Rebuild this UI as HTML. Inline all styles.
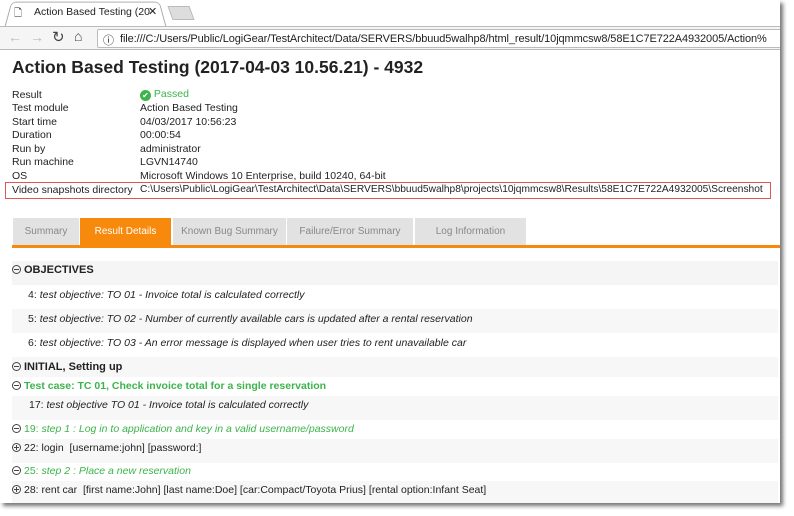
<!DOCTYPE html>
<html><head><style>
*{margin:0;padding:0;box-sizing:border-box}
body{width:794px;height:516px;background:#fff;font-family:"Liberation Sans",sans-serif;position:relative;overflow:hidden;font-size:10.5px;color:#222}
.a{position:absolute;white-space:nowrap}
.win{position:absolute;left:0;top:0;width:780px;height:503px;background:#fff;box-shadow:3px 3px 4px rgba(0,0,0,.55);overflow:hidden}
.tabbar{position:absolute;left:0;top:0;width:780px;height:26px;background:#fff}
.chtab{position:absolute;left:8px;top:1px;width:155px;height:26px;background:#fff;border:1px solid #aaa;border-bottom:none;border-radius:5px 5px 0 0;transform:perspective(40px) rotateX(8deg)}
.nav{position:absolute;left:0;top:26px;width:780px;height:24px;background:#f5f5f5;border-top:1px solid #bbb;border-bottom:1px solid #bbb}
.url{position:absolute;left:97px;top:2px;width:700px;height:19px;background:#fff;border:1px solid #bbb;border-radius:2px;font-size:11px;padding:3px 0 0 22px;color:#222;letter-spacing:-0.1px}
.lbl{left:12px}.val{left:140px}
.tab{position:absolute;top:218px;height:27px;background:#e2e2e2;color:#888;font-size:10px;text-align:center;line-height:27px}
.row{position:absolute;left:12px;width:766px;height:24px}
.g{color:#3cb44b}
.ci{display:inline-block;width:9px;height:9px;border:1px solid #444;border-radius:50%;position:relative;vertical-align:-1px;margin-right:3px}
.ci:before{content:"";position:absolute;left:1px;right:1px;top:3px;height:1px;background:#444}
.ci.p:after{content:"";position:absolute;top:1px;bottom:1px;left:3px;width:1px;background:#444}
i{font-style:italic}
</style></head><body>
<div class="win">
<div class="tabbar"></div>
<div class="chtab"></div>
<div class="a" style="left:14px;top:6px;font-size:10px">&#128459;</div>
<div class="a" style="left:34px;top:6px;font-size:10.5px">Action Based Testing (20</div>
<div class="a" style="left:148px;top:5px;font-size:11px">✕</div>
<div class="a" style="left:170px;top:6px;width:22px;height:14px;background:#ddd;border:1px solid #bbb;transform:skewX(20deg)"></div>
<div class="nav">
<div class="a" style="left:8px;top:2px;font-size:14px;color:#bbb">←</div>
<div class="a" style="left:30px;top:2px;font-size:14px;color:#bbb">→</div>
<div class="a" style="left:52px;top:1px;font-size:15px;color:#444">↻</div>
<div class="a" style="left:74px;top:1px;font-size:14px;color:#444">⌂</div>
<div class="url"><span class="a" style="left:5px;top:2px;font-size:11px">ⓘ</span>file:///C:/Users/Public/LogiGear/TestArchitect/Data/SERVERS/bbuud5walhp8/html_result/10jqmmcsw8/58E1C7E722A4932005/Action%</div>
</div>
<div class="a" style="left:12px;top:57px;font-size:17.5px;font-weight:bold;color:#222">Action Based Testing (2017-04-03 10.56.21) - 4932</div>
<div class="a lbl" style="top:89px">Result</div><div class="a val g" style="top:88px"><span style="display:inline-block;width:11px;height:11px;border-radius:50%;background:#3cb44b;color:#fff;font-size:8px;text-align:center;line-height:11px;vertical-align:-1px">✔</span> Passed</div>
<div class="a lbl" style="top:102px">Test module</div><div class="a val" style="top:102px">Action Based Testing</div>
<div class="a lbl" style="top:116px">Start time</div><div class="a val" style="top:116px">04/03/2017 10:56:23</div>
<div class="a lbl" style="top:129px">Duration</div><div class="a val" style="top:129px">00:00:54</div>
<div class="a lbl" style="top:143px">Run by</div><div class="a val" style="top:143px">administrator</div>
<div class="a lbl" style="top:156px">Run machine</div><div class="a val" style="top:156px">LGVN14740</div>
<div class="a lbl" style="top:170px">OS</div><div class="a val" style="top:170px">Microsoft Windows 10 Enterprise, build 10240, 64-bit</div>
<div class="a" style="left:5px;top:182px;width:766px;height:17px;border:1px solid #e05555"></div>
<div class="a lbl" style="top:184px">Video snapshots directory</div><div class="a val" style="top:184px;font-size:10.2px">C:\Users\Public\LogiGear\TestArchitect\Data\SERVERS\bbuud5walhp8\projects\10jqmmcsw8\Results\58E1C7E722A4932005\Screenshot</div>
<div class="tab" style="left:13px;width:66px">Summary</div>
<div class="tab" style="left:80px;width:91px;background:#f7890c;color:#fff">Result Details</div>
<div class="tab" style="left:173px;width:113px">Known Bug Summary</div>
<div class="tab" style="left:287px;width:126px">Failure/Error Summary</div>
<div class="tab" style="left:415px;width:111px">Log Information</div>
<div class="a" style="left:12px;top:245px;width:768px;height:3px;background:#f7890c"></div>
<div class="row" style="top:261px;background:#f5f5f5"></div>
<div class="a" style="left:12px;top:264px;font-weight:bold;font-size:11px"><span class="ci"></span>OBJECTIVES</div>
<div class="a" style="left:28px;top:289px">4: <i>test objective: TO 01 - Invoice total is calculated correctly</i></div>
<div class="row" style="top:309px;background:#f7f7f7"></div>
<div class="a" style="left:28px;top:313px">5: <i>test objective: TO 02 - Number of currently available cars is updated after a rental reservation</i></div>
<div class="a" style="left:28px;top:337px">6: <i>test objective: TO 03 - An error message is displayed when user tries to rent unavailable car</i></div>
<div class="row" style="top:357px;height:20px;background:#f7f7f7"></div>
<div class="a" style="left:12px;top:361px;font-weight:bold;font-size:11px"><span class="ci"></span>INITIAL, Setting up</div>
<div class="a g" style="left:12px;top:380px;font-weight:bold"><span class="ci" style="border-color:#444"></span>Test case: TC 01, Check invoice total for a single reservation</div>
<div class="row" style="top:396px;height:24px;background:#f7f7f7"></div>
<div class="a" style="left:29px;top:399px">17: <i>test objective TO 01 - Invoice total is calculated correctly</i></div>
<div class="a g" style="left:12px;top:423px"><span class="ci"></span>19: <i>step 1 : Log in to application and key in a valid username/password</i></div>
<div class="row" style="top:439px;height:24px;background:#f7f7f7"></div>
<div class="a" style="left:12px;top:442px"><span class="ci p"></span>22: login &nbsp;[username:john] [password:]</div>
<div class="a g" style="left:12px;top:465px"><span class="ci"></span>25: <i>step 2 : Place a new reservation</i></div>
<div class="row" style="top:481px;height:22px;background:#f7f7f7"></div>
<div class="a" style="left:12px;top:484px"><span class="ci p"></span>28: rent car &nbsp;[first name:John] [last name:Doe] [car:Compact/Toyota Prius] [rental option:Infant Seat]</div>
</div>
</body></html>
